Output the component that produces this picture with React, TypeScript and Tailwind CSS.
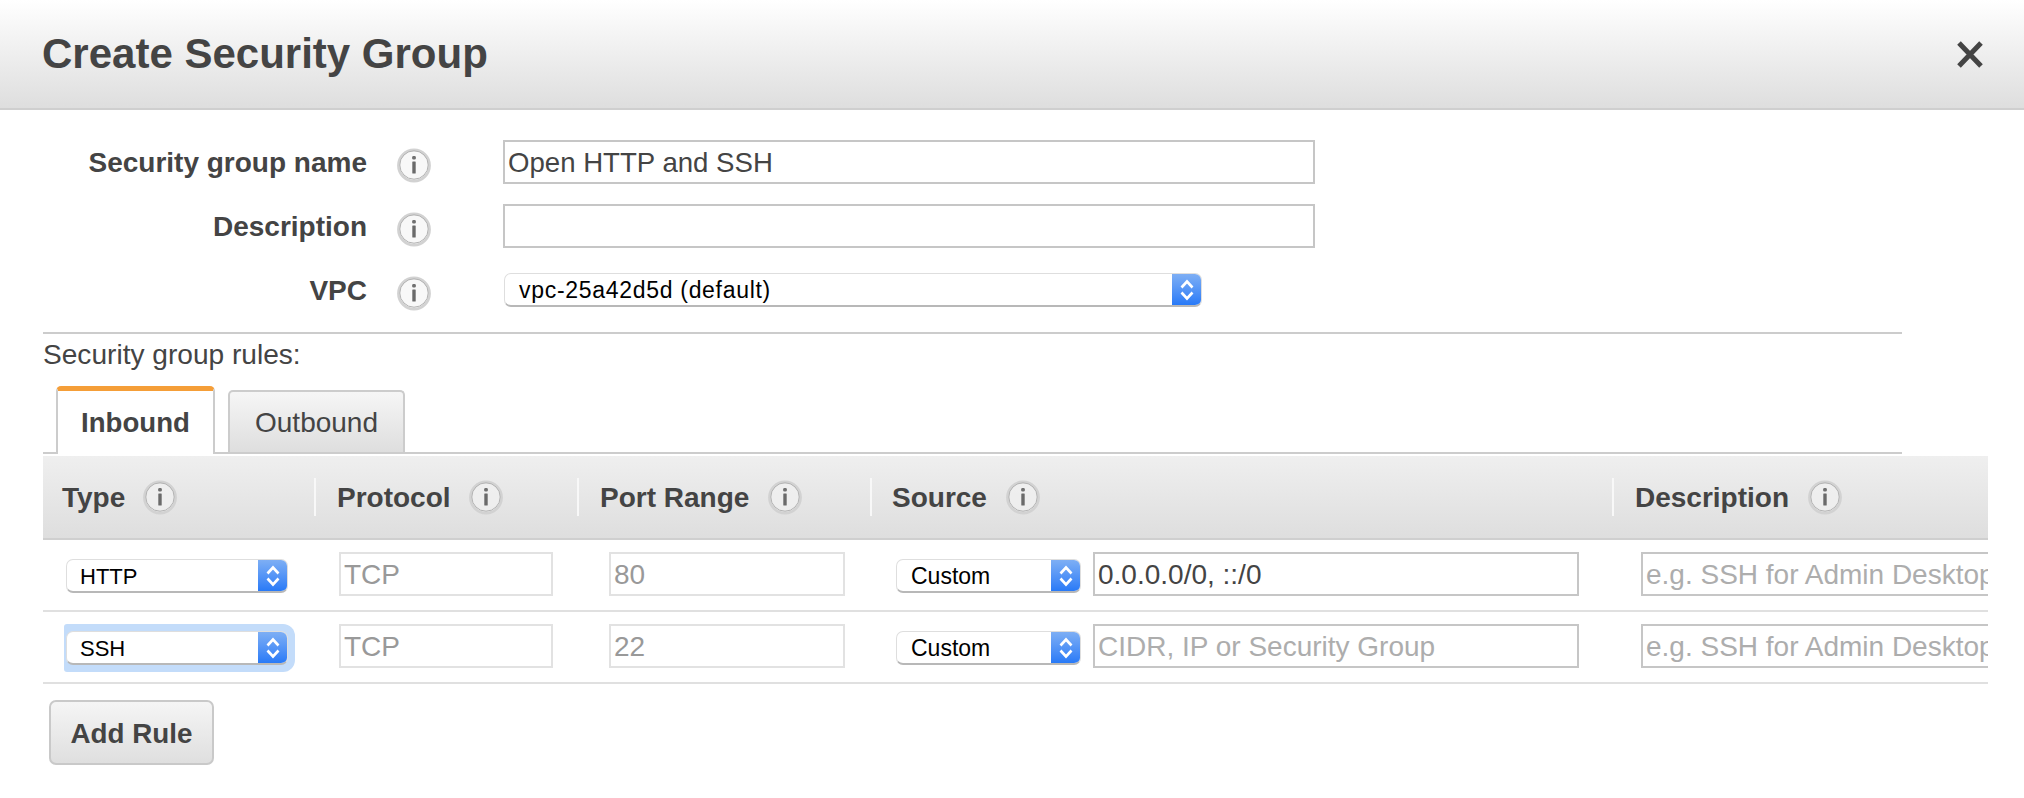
import React from "react";

function InfoIcon({ className = "" }: { className?: string }) {
  return (
    <svg width="34" height="35" viewBox="0 0 34 35" className={`shrink-0 ${className}`}>
      <circle cx="17" cy="17.5" r="15.6" fill="#f4f4f4" fillOpacity="0.6" stroke="#d2d2d2" strokeWidth="2.6" />
      <circle cx="17" cy="17" r="14.2" fill="none" stroke="#b4b4b4" strokeWidth="1" />
      <rect x="15.2" y="8" width="3.6" height="3.4" rx="1.2" fill="#707070" />
      <rect x="15.3" y="13.5" width="3.4" height="12" rx="0.5" fill="#6a6a6a" />
    </svg>
  );
}

function Chevrons() {
  return (
    <svg width="16" height="26" viewBox="0 0 16 26" fill="none" stroke="#ffffff" strokeWidth="2.6">
      <path d="M2.5 10.5 L8 4.5 L13.5 10.5" />
      <path d="M2.5 15.5 L8 21.5 L13.5 15.5" />
    </svg>
  );
}

function NativeSelect({
  label,
  width,
  focused,
  textClass,
}: {
  label: string;
  width: string;
  focused?: boolean;
  textClass: string;
}) {
  return (
    <div className={`relative mt-[19px] h-[34px] shrink-0 ${width}`}>
      {focused && <div className="absolute -top-[7px] -bottom-[7px] -left-[2px] -right-[7px] rounded-l-[3px] rounded-r-[12px] bg-[#c3dcfa]" />}
      <div className="relative flex h-full items-stretch overflow-hidden rounded-[7px] border border-[#dedede] border-b-2 border-b-[#b8b8b8] bg-white">
        <span className={`flex-1 pt-[1px] leading-[31px] text-black ${textClass}`}>{label}</span>
        <div className="-my-px -mb-[2px] flex w-[29px] shrink-0 items-center justify-center bg-gradient-to-b from-[#80b0f4] to-[#2076f7]">
          <Chevrons />
        </div>
      </div>
    </div>
  );
}

function TextBox({
  width,
  value,
  placeholder,
  disabled,
}: {
  width: string;
  value?: string;
  placeholder?: string;
  disabled?: boolean;
}) {
  return (
    <input
      readOnly
      value={value}
      placeholder={placeholder}
      className={`mt-[12px] h-[44px] shrink-0 border-2 bg-white pl-[3px] pt-[1px] text-[28px] outline-none placeholder:text-[#adadad] ${width} ${
        disabled ? "border-[#e2e2e2] text-[#999999]" : "border-[#c6c6c6] text-[#444444]"
      }`}
    />
  );
}

function FormRow({ label, children, height }: { label: string; children: React.ReactNode; height: string }) {
  return (
    <div className={`flex items-center ${height}`}>
      <div className="w-[324px] pt-[1px] text-right text-[28px] font-bold leading-[34px] text-[#444444]">{label}</div>
      <InfoIcon className="ml-[30px] mr-[72px] mt-[6px]" />
      {children}
    </div>
  );
}

function HeadCell({
  title,
  width,
  first,
  textGap,
  iconGap,
}: {
  title: string;
  width: string;
  first?: boolean;
  textGap: string;
  iconGap: string;
}) {
  return (
    <div className={`flex items-center ${width}`}>
      {!first && <div className="h-[38px] w-[2px] shrink-0 bg-[#f8f8f8]" />}
      <span className={`pt-[2px] text-[28px] font-bold text-[#444444] ${textGap}`}>{title}</span>
      <InfoIcon className={iconGap} />
    </div>
  );
}

function Row({
  type,
  focused,
  port,
  source,
  sourcePlaceholder,
}: {
  type: string;
  focused?: boolean;
  port: string;
  source?: string;
  sourcePlaceholder?: string;
}) {
  return (
    <div className="grid h-[72px] grid-cols-[272px_263px_292px_742px_376px] border-b-2 border-[#e0e0e0]">
      <div className="pl-[23px]">
        <NativeSelect label={type} width="w-[222px]" focused={focused} textClass="pl-[13px] text-[22px]" />
      </div>
      <div className="pl-[24px]">
        <TextBox width="w-[214px]" value="TCP" disabled />
      </div>
      <div className="pl-[31px]">
        <TextBox width="w-[236px]" value={port} disabled />
      </div>
      <div className="flex items-start gap-[12px] pl-[26px]">
        <NativeSelect label="Custom" width="w-[185px]" textClass="pl-[14px] text-[23px]" />
        <TextBox width="w-[486px]" value={source} placeholder={sourcePlaceholder} />
      </div>
      <div className="pl-[29px]">
        <TextBox width="w-[400px]" placeholder="e.g. SSH for Admin Desktop" />
      </div>
    </div>
  );
}

export default function App() {
  return (
    <div className="min-h-screen w-[2024px] bg-white font-['Liberation_Sans',sans-serif] text-[#444444]">
      <header className="flex h-[110px] items-center justify-between border-b-2 border-[#cfcfcf] bg-gradient-to-b from-white to-[#dedede] pl-[42px] pr-[41px]">
        <h1 className="text-[42px] font-bold leading-none text-[#444444]">Create Security Group</h1>
        <svg width="26" height="27" viewBox="0 0 26 27" className="mt-[1px]">
          <path d="M2 2 L24 25 M24 2 L2 25" stroke="#444444" strokeWidth="5" fill="none" />
        </svg>
      </header>

      <main className="pl-[43px] pt-[30px]">
        <div className="flex flex-col">
          <FormRow label="Security group name" height="h-[44px]">
            <input
              readOnly
              value="Open HTTP and SSH"
              className="h-[44px] w-[812px] border-2 border-[#c6c6c6] bg-white pl-[3px] pt-[1px] text-[27.6px] text-[#444444] outline-none"
            />
          </FormRow>
          <div className="mt-[20px]">
            <FormRow label="Description" height="h-[44px]">
              <input readOnly className="h-[44px] w-[812px] border-2 border-[#c6c6c6] bg-white outline-none" />
            </FormRow>
          </div>
          <div className="mt-[25px]">
            <FormRow label="VPC" height="h-[34px]">
              <div className="ml-px">
                <div className="-mt-[19px]">
                  <NativeSelect label="vpc-25a42d5d (default)" width="w-[698px]" textClass="pl-[14px] text-[23px] tracking-[0.7px]" />
                </div>
              </div>
            </FormRow>
          </div>
        </div>

        <div className="mt-[25px] w-[1859px] border-t-2 border-[#cccccc]" />
        <div className="text-[28.1px] leading-[42px] text-[#444444]">Security group rules:</div>

        <div className="mt-[10px] flex h-[68px] w-[1859px] items-end border-b-2 border-[#cccccc] pl-[13px]">
          <div className="-mb-[2px] flex h-[68px] w-[159px] items-center justify-center rounded-t-[5px] border-x-2 border-t-[5px] border-x-[#cccccc] border-t-[#f59e38] bg-white text-[27.6px] font-bold text-[#444444]">
            Inbound
          </div>
          <div className="ml-[13px] flex h-[62px] w-[177px] items-center justify-center rounded-t-[5px] border-x-2 border-t-2 border-[#cccccc] bg-gradient-to-b from-[#f6f6f6] to-[#dedede] pt-[2px] text-[28px] text-[#444444]">
            Outbound
          </div>
        </div>

        <div className="mt-[2px] w-[1945px] overflow-hidden">
          <div className="flex h-[84px] border-b-2 border-[#cfcfcf] bg-gradient-to-b from-[#efefef] to-[#dedede]">
            <HeadCell title="Type" width="w-[271px]" first textGap="ml-[19px]" iconGap="ml-[18px]" />
            <HeadCell title="Protocol" width="w-[263px]" textGap="ml-[21px]" iconGap="ml-[18px]" />
            <HeadCell title="Port Range" width="w-[293px]" textGap="ml-[21px]" iconGap="ml-[19px]" />
            <HeadCell title="Source" width="w-[742px]" textGap="ml-[20px]" iconGap="ml-[19px]" />
            <HeadCell title="Description" width="w-[376px]" textGap="ml-[21px]" iconGap="ml-[19px]" />
          </div>
          <Row type="HTTP" port="80" source="0.0.0.0/0, ::/0" />
          <Row type="SSH" focused port="22" sourcePlaceholder="CIDR, IP or Security Group" />
        </div>

        <button className="ml-[6px] mt-[16px] h-[65px] w-[165px] rounded-[7px] border-2 border-[#c9c9c9] bg-gradient-to-b from-[#f5f5f5] to-[#dfdfdf] pt-[2px] text-[27.8px] font-bold text-[#444444]">
          Add Rule
        </button>
      </main>
    </div>
  );
}
